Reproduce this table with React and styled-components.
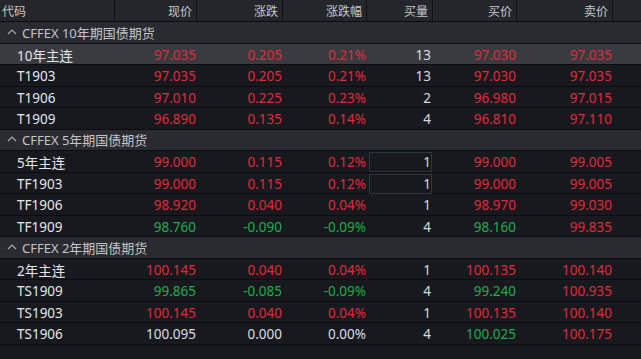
import React from "react";
import styled, { createGlobalStyle } from "styled-components";

const GlobalStyle = createGlobalStyle`
  html, body {
    margin: 0;
    padding: 0;
    background: #16181d;
  }
  body {
    font-family: "Noto Sans", "Noto Sans CJK SC", sans-serif;
  }
`;

const COLS = "115px 82px 86px 84px 66px 84px 96px 1fr";

const RED = "#e02a3a";
const GREEN = "#1eae4a";
const WHITE = "#dcdee2";

const groups = [
  {
    title: "CFFEX 10年期国债期货",
    rows: [
      ["10年主连", "97.035", "0.205", "0.21%", "13", "97.030", "97.035", "rrr rr", true],
      ["T1903", "97.035", "0.205", "0.21%", "13", "97.030", "97.035", "rrr rr"],
      ["T1906", "97.010", "0.225", "0.23%", "2", "96.980", "97.015", "rrr rr"],
      ["T1909", "96.890", "0.135", "0.14%", "4", "96.810", "97.110", "rrr rr"],
    ],
  },
  {
    title: "CFFEX 5年期国债期货",
    rows: [
      ["5年主连", "99.000", "0.115", "0.12%", "1", "99.000", "99.005", "rrr rr", false, true],
      ["TF1903", "99.000", "0.115", "0.12%", "1", "99.000", "99.005", "rrr rr", false, true],
      ["TF1906", "98.920", "0.040", "0.04%", "1", "98.970", "99.030", "rrr rr"],
      ["TF1909", "98.760", "-0.090", "-0.09%", "4", "98.160", "99.835", "ggg gr"],
    ],
  },
  {
    title: "CFFEX 2年期国债期货",
    rows: [
      ["2年主连", "100.145", "0.040", "0.04%", "1", "100.135", "100.140", "rrr rr"],
      ["TS1909", "99.865", "-0.085", "-0.09%", "4", "99.240", "100.935", "ggg gr"],
      ["TS1903", "100.145", "0.040", "0.04%", "1", "100.135", "100.140", "rrr rr"],
      ["TS1906", "100.095", "0.000", "0.00%", "4", "100.025", "100.175", "www gr"],
    ],
  },
];

const colorOf = (c) => (c === "r" ? RED : c === "g" ? GREEN : WHITE);

const Caret = () => (
  <svg width="10" height="7" viewBox="0 0 10 7">
    <path d="M1 6 L5 2 L9 6" fill="none" stroke="#a9abb0" strokeWidth="1.1" />
  </svg>
);

const App = () => {
  const heads = ["现价", "涨跌", "涨跌幅", "买量", "买价", "卖价"];
  return (
    <>
      <GlobalStyle />
      <Board>
        <HeaderRow>
          <HeadCell $left>代码</HeadCell>
          {heads.map((h) => (
            <HeadCell key={h}>{h}</HeadCell>
          ))}
          <HeadCell />
        </HeaderRow>
        {groups.map((g) => (
          <React.Fragment key={g.title}>
            <GroupRow>
              <Caret />
              <span>{g.title}</span>
            </GroupRow>
            {g.rows.map((r) => {
              const [name, price, chg, pct, qty, bid, ask, cs, selected, boxed] = r;
              return (
                <Row key={name} $selected={selected}>
                  <Name>{name}</Name>
                  <Cell $color={colorOf(cs[0])}>{price}</Cell>
                  <Cell $color={colorOf(cs[1])}>{chg}</Cell>
                  <Cell $color={colorOf(cs[2])}>{pct}</Cell>
                  <Qty $boxed={boxed}>{qty}</Qty>
                  <Cell $color={colorOf(cs[4])}>{bid}</Cell>
                  <Cell $color={colorOf(cs[5])}>{ask}</Cell>
                  <Cell />
                </Row>
              );
            })}
          </React.Fragment>
        ))}
      </Board>
    </>
  );
};

const Board = styled.div`
  width: 641px;
  height: 359px;
  background: #16181d;
  overflow: hidden;
`;

const HeaderRow = styled.div`
  display: grid;
  grid-template-columns: ${COLS};
  height: 22px;
  box-sizing: border-box;
  background: #25262b;
  border-bottom: 1px solid #0c0d10;
`;

const HeadCell = styled.div`
  display: flex;
  align-items: center;
  justify-content: ${(p) => (p.$left ? "flex-start" : "flex-end")};
  padding: ${(p) => (p.$left ? "0 0 0 2px" : "0 4px 0 0")};
  border-right: 1px solid #111215;
  font-family: "Noto Sans CJK SC", sans-serif;
  font-size: 12px;
  color: #c4c6ca;
  &:last-child {
    border-right: none;
  }
`;

const GroupRow = styled.div`
  display: flex;
  align-items: center;
  gap: 5px;
  height: 21.5px;
  box-sizing: border-box;
  padding-left: 7px;
  background: #2a2b30;
  border-bottom: 1px solid #0c0d10;
  font-family: "Noto Sans", "Noto Sans CJK SC", sans-serif;
  font-size: 13px;
  color: #c3c5c9;
  svg {
    margin-bottom: 2px;
  }
`;

const Row = styled.div`
  display: grid;
  grid-template-columns: ${COLS};
  height: 21.5px;
  box-sizing: border-box;
  background: ${(p) => (p.$selected ? "#3a3b40" : "#17191e")};
  border-bottom: 1px solid #0b0c0f;
  font-family: "Noto Sans", "Noto Sans CJK SC", sans-serif;
  font-size: 13.5px;
`;

const Cell = styled.div`
  display: flex;
  align-items: center;
  justify-content: flex-end;
  padding-right: 1px;
  color: ${(p) => p.$color || WHITE};
`;

const Name = styled(Cell)`
  justify-content: flex-start;
  padding-left: 17px;
  color: #e4e6ea;
`;

const Qty = styled(Cell)`
  margin: 1px 1px 1px 2px;
  padding-right: 0;
  border: 1px solid ${(p) => (p.$boxed ? "#2b3836" : "transparent")};
  color: #d8dadf;
`;

export default App;
